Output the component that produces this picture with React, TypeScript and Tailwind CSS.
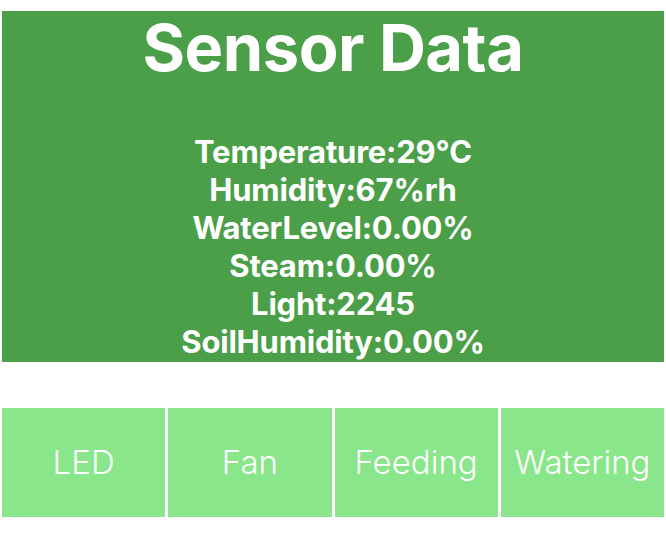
import React from "react";

const lines = [
  "Temperature:29℃",
  "Humidity:67%rh",
  "WaterLevel:0.00%",
  "Steam:0.00%",
  "Light:2245",
  "SoilHumidity:0.00%",
];

const buttons = ["LED", "Fan", "Feeding", "Watering"];

export default function App() {
  return (
    <div className="w-[666px] h-[534px] bg-white pt-[11px] px-[2px]" style={{ fontFamily: "Inter, 'Noto Sans', sans-serif" }}>
      <div className="h-[351px] bg-[#4a9f48] flex flex-col items-center text-white">
        <div className="text-[65px] font-bold leading-none mt-[4px] tracking-[-0.5px]">Sensor Data</div>
        <div className="mt-[53px] flex flex-col items-center">
          {lines.map((l) => (
            <div key={l} className="text-[31px] font-bold leading-[38px] h-[38px] tracking-[-0.2px]">{l}</div>
          ))}
        </div>
      </div>
      <div className="mt-[46px] flex gap-[3px] h-[109px]">
        {buttons.map((b) => (
          <div key={b} className="flex-1 bg-[#8ae68a] flex items-center justify-center text-white text-[33px] font-light">
            {b}
          </div>
        ))}
      </div>
    </div>
  );
}
